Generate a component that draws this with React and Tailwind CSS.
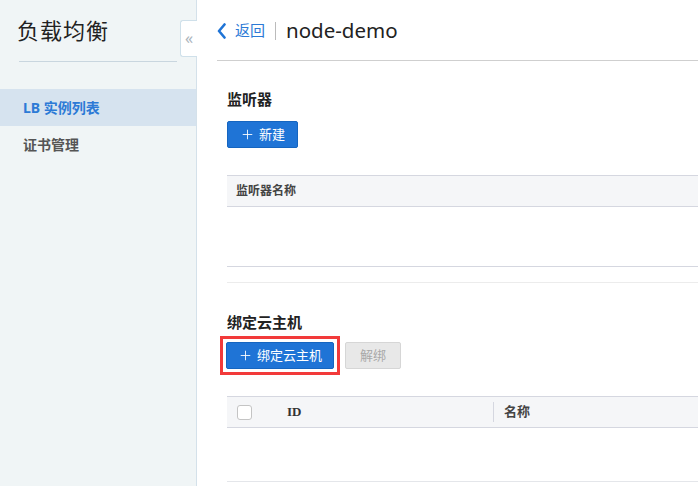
import { Plus } from "lucide-react";

const font = { fontFamily: '"Noto Sans", "Noto Sans CJK SC", sans-serif' };

export default function App() {
  return (
    <div
      className="flex w-[698px] h-[486px] overflow-hidden bg-white text-[#333]"
      style={font}
    >
      {/* Sidebar */}
      <aside className="relative w-[197px] shrink-0 bg-[#f0f5f6] border-r border-[#d4e1ea]">
        <div className="px-[17px] pt-[15px]">
          <h1 className="text-[22px] leading-[30px] text-[#222] tracking-[1px]">负载均衡</h1>
        </div>
        <div className="mx-[19px] mt-[16px] border-b border-[#c9d6df]" />
        <nav className="mt-[27px]">
          <div className="h-[37px] flex items-center px-[23px] bg-[#d6e3ef] text-[14px] font-bold text-[#2c7ad6]">
            LB 实例列表
          </div>
          <div className="h-[37px] flex items-center px-[23px] text-[14px] font-bold text-[#555]">
            证书管理
          </div>
        </nav>
        <button className="absolute right-[-1px] top-[20px] w-[17px] h-[37px] bg-white border border-[#cfe0ea] border-r-0 rounded-l-[3px] flex items-center justify-center text-[#aab4bc] text-[16px] leading-none pb-[2px]">
          «
        </button>
      </aside>

      {/* Main */}
      <main className="flex-1 min-w-0">
        <header className="ml-[20px] h-[61px] border-b border-[#cfcfcf] flex items-center pt-[1px]">
          <svg width="10" height="16" viewBox="0 0 10 16" className="text-[#1f74d6]">
            <path d="M7.5 1.5 L2 8 L7.5 14.5" fill="none" stroke="currentColor" strokeWidth="2.6" strokeLinecap="round" strokeLinejoin="round" />
          </svg>
          <span className="ml-[8px] text-[15px] text-[#2c7ad6]">返回</span>
          <span className="mx-[10px] h-[18px] border-l border-[#bbb]" />
          <span className="text-[20.5px] text-[#222]">node-demo</span>
        </header>

        <section className="pl-[30px] pt-[27px]">
          <h2 className="text-[15px] font-bold text-[#222] leading-[22px]">监听器</h2>
          <button className="mt-[11px] w-[71px] h-[27px] rounded-[2px] bg-[#1f74d6] border border-[#1565c0] text-white text-[13px] flex items-center justify-center gap-[4px]">
            <Plus className="w-[15px] h-[15px]" strokeWidth={1.4} />
            新建
          </button>
          <div className="mt-[27px] border-t border-[#d5d7e0]">
            <div className="h-[31px] bg-[#f5f6f8] border-b border-[#d5d7e0] flex items-center px-[9px] text-[12px] font-bold text-[#444]">
              监听器名称
            </div>
            <div className="h-[60px] border-b border-[#d5d7e0]" />
          </div>
          <div className="mt-[15px] border-b border-[#ececec]" />

          <h2 className="mt-[28px] text-[15px] font-bold text-[#222] leading-[22px]">绑定云主机</h2>
          <div className="mt-[3px] -ml-[7px] flex items-center gap-[5px]">
            <div className="border-[3px] border-[#f23a3a] p-[3px]">
              <button className="w-[108px] h-[27px] rounded-[2px] bg-[#1f74d6] border border-[#1565c0] text-white text-[13px] flex items-center justify-center gap-[4px]">
                <Plus className="w-[15px] h-[15px]" strokeWidth={1.4} />
                绑定云主机
              </button>
            </div>
            <button className="w-[56px] h-[27px] rounded-[2px] bg-[#e8e8e8] border border-[#d6d6d6] text-[#a8a8a8] text-[13px]">
              解绑
            </button>
          </div>
          <div className="mt-[21px] border-t border-[#d5d7e0]">
            <div className="h-[31px] bg-[#f5f6f8] border-b border-[#d5d7e0] flex items-center text-[13px] font-bold text-[#444]">
              <div className="w-[266px] flex items-center pl-[10px]">
                <span className="w-[15px] h-[15px] rounded-[3px] border border-[#c4c4c4] bg-white" />
                <span
                  className="ml-[35px] text-[#333]"
                  style={{ fontFamily: '"Liberation Serif", serif' }}
                >
                  ID
                </span>
              </div>
              <div className="h-[20px] border-l border-[#d5d7e0]" />
              <span className="ml-[10px]">名称</span>
            </div>
            <div className="h-[54px] border-b border-[#e4e6ea]" />
          </div>
        </section>
      </main>
    </div>
  );
}
